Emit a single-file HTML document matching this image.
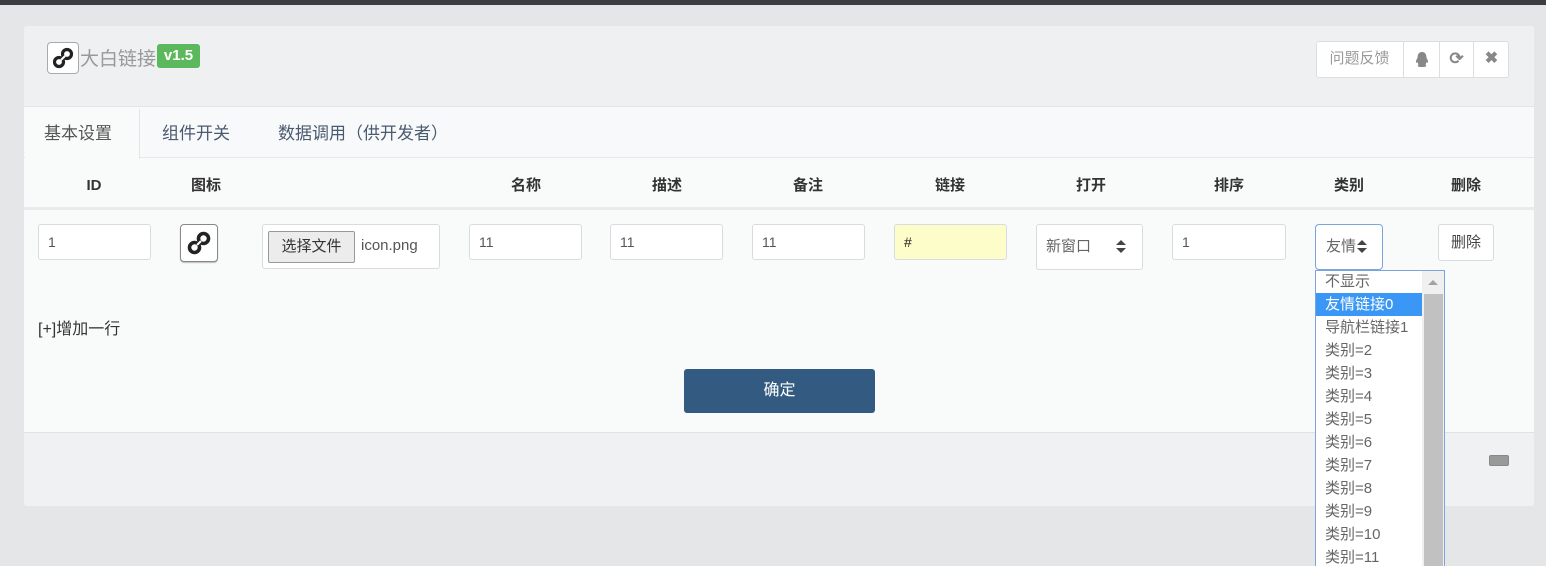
<!DOCTYPE html>
<html><head><meta charset="utf-8"><style>
*{box-sizing:border-box;margin:0;padding:0}
body{width:1546px;height:566px;overflow:hidden;background:#e4e6e8;font-family:"Liberation Sans","Noto Sans CJK SC",sans-serif;font-size:15px;color:#333;position:relative}
.a{position:absolute}
.inp{position:absolute;background:#fff;border:1px solid #d8dbe0;border-radius:3px;height:36px;padding-left:9px;line-height:34px;font-size:14px;color:#555}
.th{position:absolute;top:174px;font-weight:bold;font-size:15px;color:#333;text-align:center}
.opt{height:23px;line-height:23px;padding-left:9px;font-size:15px;color:#666;white-space:nowrap}
</style></head><body>
<div class="a" style="left:0;top:0;width:1546px;height:5px;background:#3b3d41"></div>
<div class="a" style="left:24px;top:26px;width:1510px;height:480px;background:#f9fafa;border-radius:3px;overflow:hidden">
  <div class="a" style="left:0;top:0;width:1510px;height:81px;background:#eef0f1;border-bottom:1px solid #e3e5e7"></div>
  <div class="a" style="left:23px;top:16px;width:32px;height:32px;background:#fff;border:1px solid #aaa;border-radius:4px">
    <svg width="30" height="30" viewBox="0 0 30 30"><g fill="none" stroke="#222" stroke-width="3.2"><circle cx="11" cy="19" r="4.5"/><circle cx="19" cy="11" r="4.5"/></g><line x1="13" y1="17" x2="17" y2="13" stroke="#fff" stroke-width="2"/></svg>
  </div>
  <div class="a" style="left:56px;top:18px;font-size:19px;color:#999;letter-spacing:0px">大白链接</div>
  <div class="a" style="left:133px;top:18px;width:43px;height:24px;background:#5cb85c;border-radius:3px;color:#fff;font-weight:bold;font-size:15px;text-align:center;line-height:24px">v1.5</div>
  <div class="a" style="left:1292px;top:15px;width:193px;height:37px;background:#fff;border:1px solid #dcdfe2;border-radius:3px"></div>
  <div class="a" style="left:1292px;top:15px;width:88px;height:37px;line-height:36px;text-align:center;color:#999;font-size:15px;border-right:1px solid #dcdfe2">问题反馈</div>
  <div class="a" style="left:1380px;top:15px;width:36px;height:37px;border-right:1px solid #dcdfe2"><svg class="a" style="left:10px;top:10px" width="16" height="17" viewBox="0 0 16 17"><path d="M8 1C4.5 1 3.5 4 3.5 7 2 9 1.5 11 2.5 12 3 11.5 3.5 11 3.5 11 4 13 5 14 3.5 15 5 16.5 11 16.5 12.5 15 11 14 12 13 12.5 11 12.5 11 13 11.5 13.5 12 14.5 11 14 9 12.5 7 12.5 4 11.5 1 8 1Z" fill="#888"/></svg></div>
  <div class="a" style="left:1416px;top:15px;width:34px;height:37px;border-right:1px solid #dcdfe2;text-align:center;line-height:36px;color:#888;font-weight:bold;font-size:17px">⟳</div>
  <div class="a" style="left:1450px;top:15px;width:35px;height:37px;text-align:center;line-height:36px;color:#888;font-weight:bold;font-size:16px">✖</div>

  <div class="a" style="left:0;top:81px;width:1510px;height:51px;background:#f8f9fa;border-bottom:1px solid #e6e8ea"></div>
  <div class="a" style="left:1px;top:83px;width:115px;height:50px;background:#f9fafa;border-right:1px solid #e3e5e7"></div>
  <div class="a" style="left:20px;top:93px;font-size:17px;color:#555">基本设置</div>
  <div class="a" style="left:138px;top:93px;font-size:17px;color:#4a5a70">组件开关</div>
  <div class="a" style="left:254px;top:93px;font-size:17px;color:#4a5a70">数据调用（供开发者）</div>
  <div class="a" style="left:0;top:181px;width:1510px;height:3px;background:#e8eaec"></div>
</div>
<div class="th" style="left:74px;width:40px;top:177px">ID</div>
<div class="th" style="left:180px;width:52px">图标</div>
<div class="th" style="left:500px;width:52px">名称</div>
<div class="th" style="left:641px;width:52px">描述</div>
<div class="th" style="left:782px;width:52px">备注</div>
<div class="th" style="left:924px;width:52px">链接</div>
<div class="th" style="left:1065px;width:52px">打开</div>
<div class="th" style="left:1203px;width:52px">排序</div>
<div class="th" style="left:1323px;width:52px">类别</div>
<div class="th" style="left:1440px;width:52px">删除</div>

<div class="inp" style="left:38px;top:224px;width:113px">1</div>
<div class="a" style="left:180px;top:224px;width:38px;height:38px;background:#fff;border:1px solid #888;border-radius:4px;box-shadow:0 1px 1px #bbb">
  <svg width="36" height="36" viewBox="0 0 36 36"><g fill="none" stroke="#222" stroke-width="3.6"><circle cx="13.5" cy="22.5" r="5"/><circle cx="22.5" cy="13.5" r="5"/></g><line x1="16" y1="20" x2="20" y2="16" stroke="#fff" stroke-width="2"/></svg>
</div>
<div class="a" style="left:262px;top:224px;width:178px;height:45px;background:#fff;border:1px solid #d8dbe0;border-radius:3px"></div>
<div class="a" style="left:268px;top:231px;width:87px;height:32px;background:#ececec;border:1px solid #999;border-radius:2px;font-size:15px;color:#333;text-align:center;line-height:30px">选择文件</div>
<div class="a" style="left:361px;top:237px;font-size:15px;color:#555">icon.png</div>
<div class="inp" style="left:469px;top:224px;width:113px">11</div>
<div class="inp" style="left:610px;top:224px;width:113px">11</div>
<div class="inp" style="left:752px;top:224px;width:113px">11</div>
<div class="inp" style="left:894px;top:224px;width:113px;background:#fcfdc8;color:#222">#</div>
<div class="inp" style="left:1036px;top:224px;width:107px;height:46px;line-height:44px;font-size:15px;color:#666">新窗口</div>
<div class="a" style="left:1116px;top:240px;width:0;height:0;border-left:5px solid transparent;border-right:5px solid transparent;border-bottom:5px solid #444"></div>
<div class="a" style="left:1116px;top:248px;width:0;height:0;border-left:5px solid transparent;border-right:5px solid transparent;border-top:5px solid #444"></div>
<div class="inp" style="left:1172px;top:224px;width:114px">1</div>
<div class="a" style="left:1315px;top:224px;width:68px;height:46px;background:#fff;border:1px solid #7aa5dc;border-radius:4px;line-height:44px;padding-left:10px;font-size:15px;color:#666;overflow:hidden">友情</div>
<div class="a" style="left:1357px;top:240px;width:0;height:0;border-left:5px solid transparent;border-right:5px solid transparent;border-bottom:5px solid #444"></div>
<div class="a" style="left:1357px;top:248px;width:0;height:0;border-left:5px solid transparent;border-right:5px solid transparent;border-top:5px solid #444"></div>
<div class="a" style="left:1438px;top:224px;width:56px;height:37px;background:#fff;border:1px solid #d8dbe0;border-radius:3px;text-align:center;line-height:35px;font-size:15px;color:#444">删除</div>

<div class="a" style="left:38px;top:315px;font-size:16px;color:#333">[+]增加一行</div>
<div class="a" style="left:684px;top:369px;width:191px;height:44px;background:#335b82;border-radius:3px;color:#fff;text-align:center;line-height:44px;font-size:16px">确定</div>

<div class="a" style="left:24px;top:432px;width:1510px;height:1px;background:#dfe1e3"></div>
<div class="a" style="left:24px;top:433px;width:1510px;height:73px;background:#f0f1f2;border-radius:0 0 3px 3px"></div>
<div class="a" style="left:1489px;top:455px;width:20px;height:11px;background:#999;border:1px solid #888;border-radius:2px"></div>

<div class="a" style="left:1315px;top:270px;width:130px;height:296px;background:#fff;border:1px solid #7aa5dc;border-bottom:none;overflow:hidden">
  <div class="a" style="left:106px;top:0;width:23px;height:296px;background:#f0f0f0"></div>
  <div class="a" style="left:108px;top:23px;width:19px;height:280px;background:#c1c1c1"></div>
  <div class="a" style="left:112px;top:9px;width:0;height:0;border-left:5px solid transparent;border-right:5px solid transparent;border-bottom:5px solid #a3a3a3"></div>
  <div class="a" style="left:0;top:0;width:106px">
    <div class="opt" style="height:22px;line-height:22px">不显示</div>
    <div class="opt" style="background:#3b97f5;color:#fff">友情链接0</div>
    <div class="opt">导航栏链接1</div>
    <div class="opt">类别=2</div><div class="opt">类别=3</div><div class="opt">类别=4</div><div class="opt">类别=5</div><div class="opt">类别=6</div><div class="opt">类别=7</div><div class="opt">类别=8</div><div class="opt">类别=9</div><div class="opt">类别=10</div><div class="opt">类别=11</div>
  </div>
</div>
</body></html>
